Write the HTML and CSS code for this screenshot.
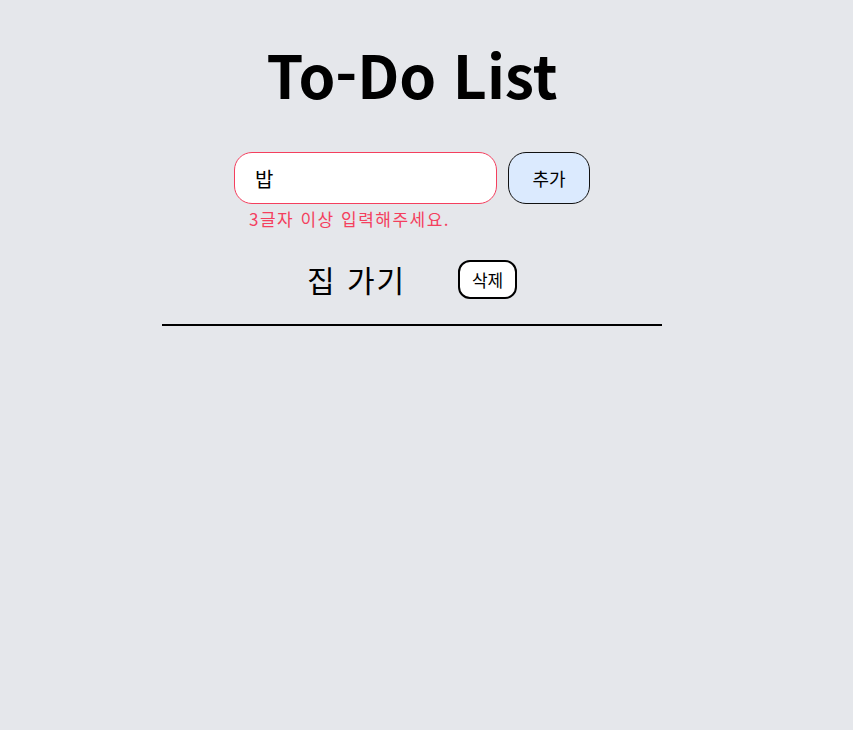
FILE: index.html
```html
<!DOCTYPE html>
<html lang="ko">
<head>
<meta charset="utf-8">
<link rel="stylesheet" href="styles.css">
</head>
<body>
<div class="app">
  <h1 class="title">To-Do List</h1>
  <div class="form">
    <div class="field">
      <input class="input" type="text" value="밥">
      <p class="error">3글자 이상 입력해주세요.</p>
    </div>
    <button class="add">추가</button>
  </div>
  <ul class="list">
    <li class="item">
      <span class="text">집 가기</span>
      <button class="del">삭제</button>
    </li>
  </ul>
</div>
</body>
</html>
```

FILE: styles.css
```css
html, body {
  margin: 0;
  padding: 0;
  background: #e5e7eb;
  font-family: "Noto Sans CJK KR", "Noto Sans", sans-serif;
}
.app {
  width: 500px;
  margin-left: 162px;
  padding-top: 36px;
}
.title {
  margin: 0;
  text-align: center;
  font-size: 59px;
  font-weight: 700;
  line-height: 76px;
  color: #000;
}
.form {
  display: flex;
  justify-content: center;
  align-items: flex-start;
  gap: 11px;
  margin-top: 40px;
}
.field {
  display: flex;
  flex-direction: column;
}
.input {
  box-sizing: border-box;
  width: 263px;
  height: 52px;
  border: 1px solid #f43f5e;
  border-radius: 18px;
  background: #fff;
  padding: 0 20px;
  font-family: inherit;
  font-size: 20px;
  color: #000;
  outline: none;
}
.error {
  margin: 4px 0 0 15px;
  font-size: 17px;
  line-height: 22px;
  letter-spacing: 1.5px;
  color: #f43f5e;
}
.add {
  box-sizing: border-box;
  width: 82px;
  height: 52px;
  border: 1px solid #111;
  border-radius: 18px;
  background: #dbeafe;
  font-family: inherit;
  font-size: 18px;
  color: #000;
  padding: 0;
}
.list {
  list-style: none;
  margin: 0;
  padding: 0;
}
.item {
  display: flex;
  justify-content: center;
  align-items: center;
  gap: 52px;
  margin-top: 27px;
  padding-bottom: 23px;
  border-bottom: 2px solid #000;
}
.text {
  font-size: 30px;
  line-height: 44px;
  letter-spacing: 2px;
  color: #000;
}
.del {
  box-sizing: border-box;
  width: 59px;
  height: 39px;
  border: 2px solid #000;
  border-radius: 12px;
  background: #fff;
  font-family: inherit;
  font-size: 17px;
  color: #000;
  padding: 0;
}
```
